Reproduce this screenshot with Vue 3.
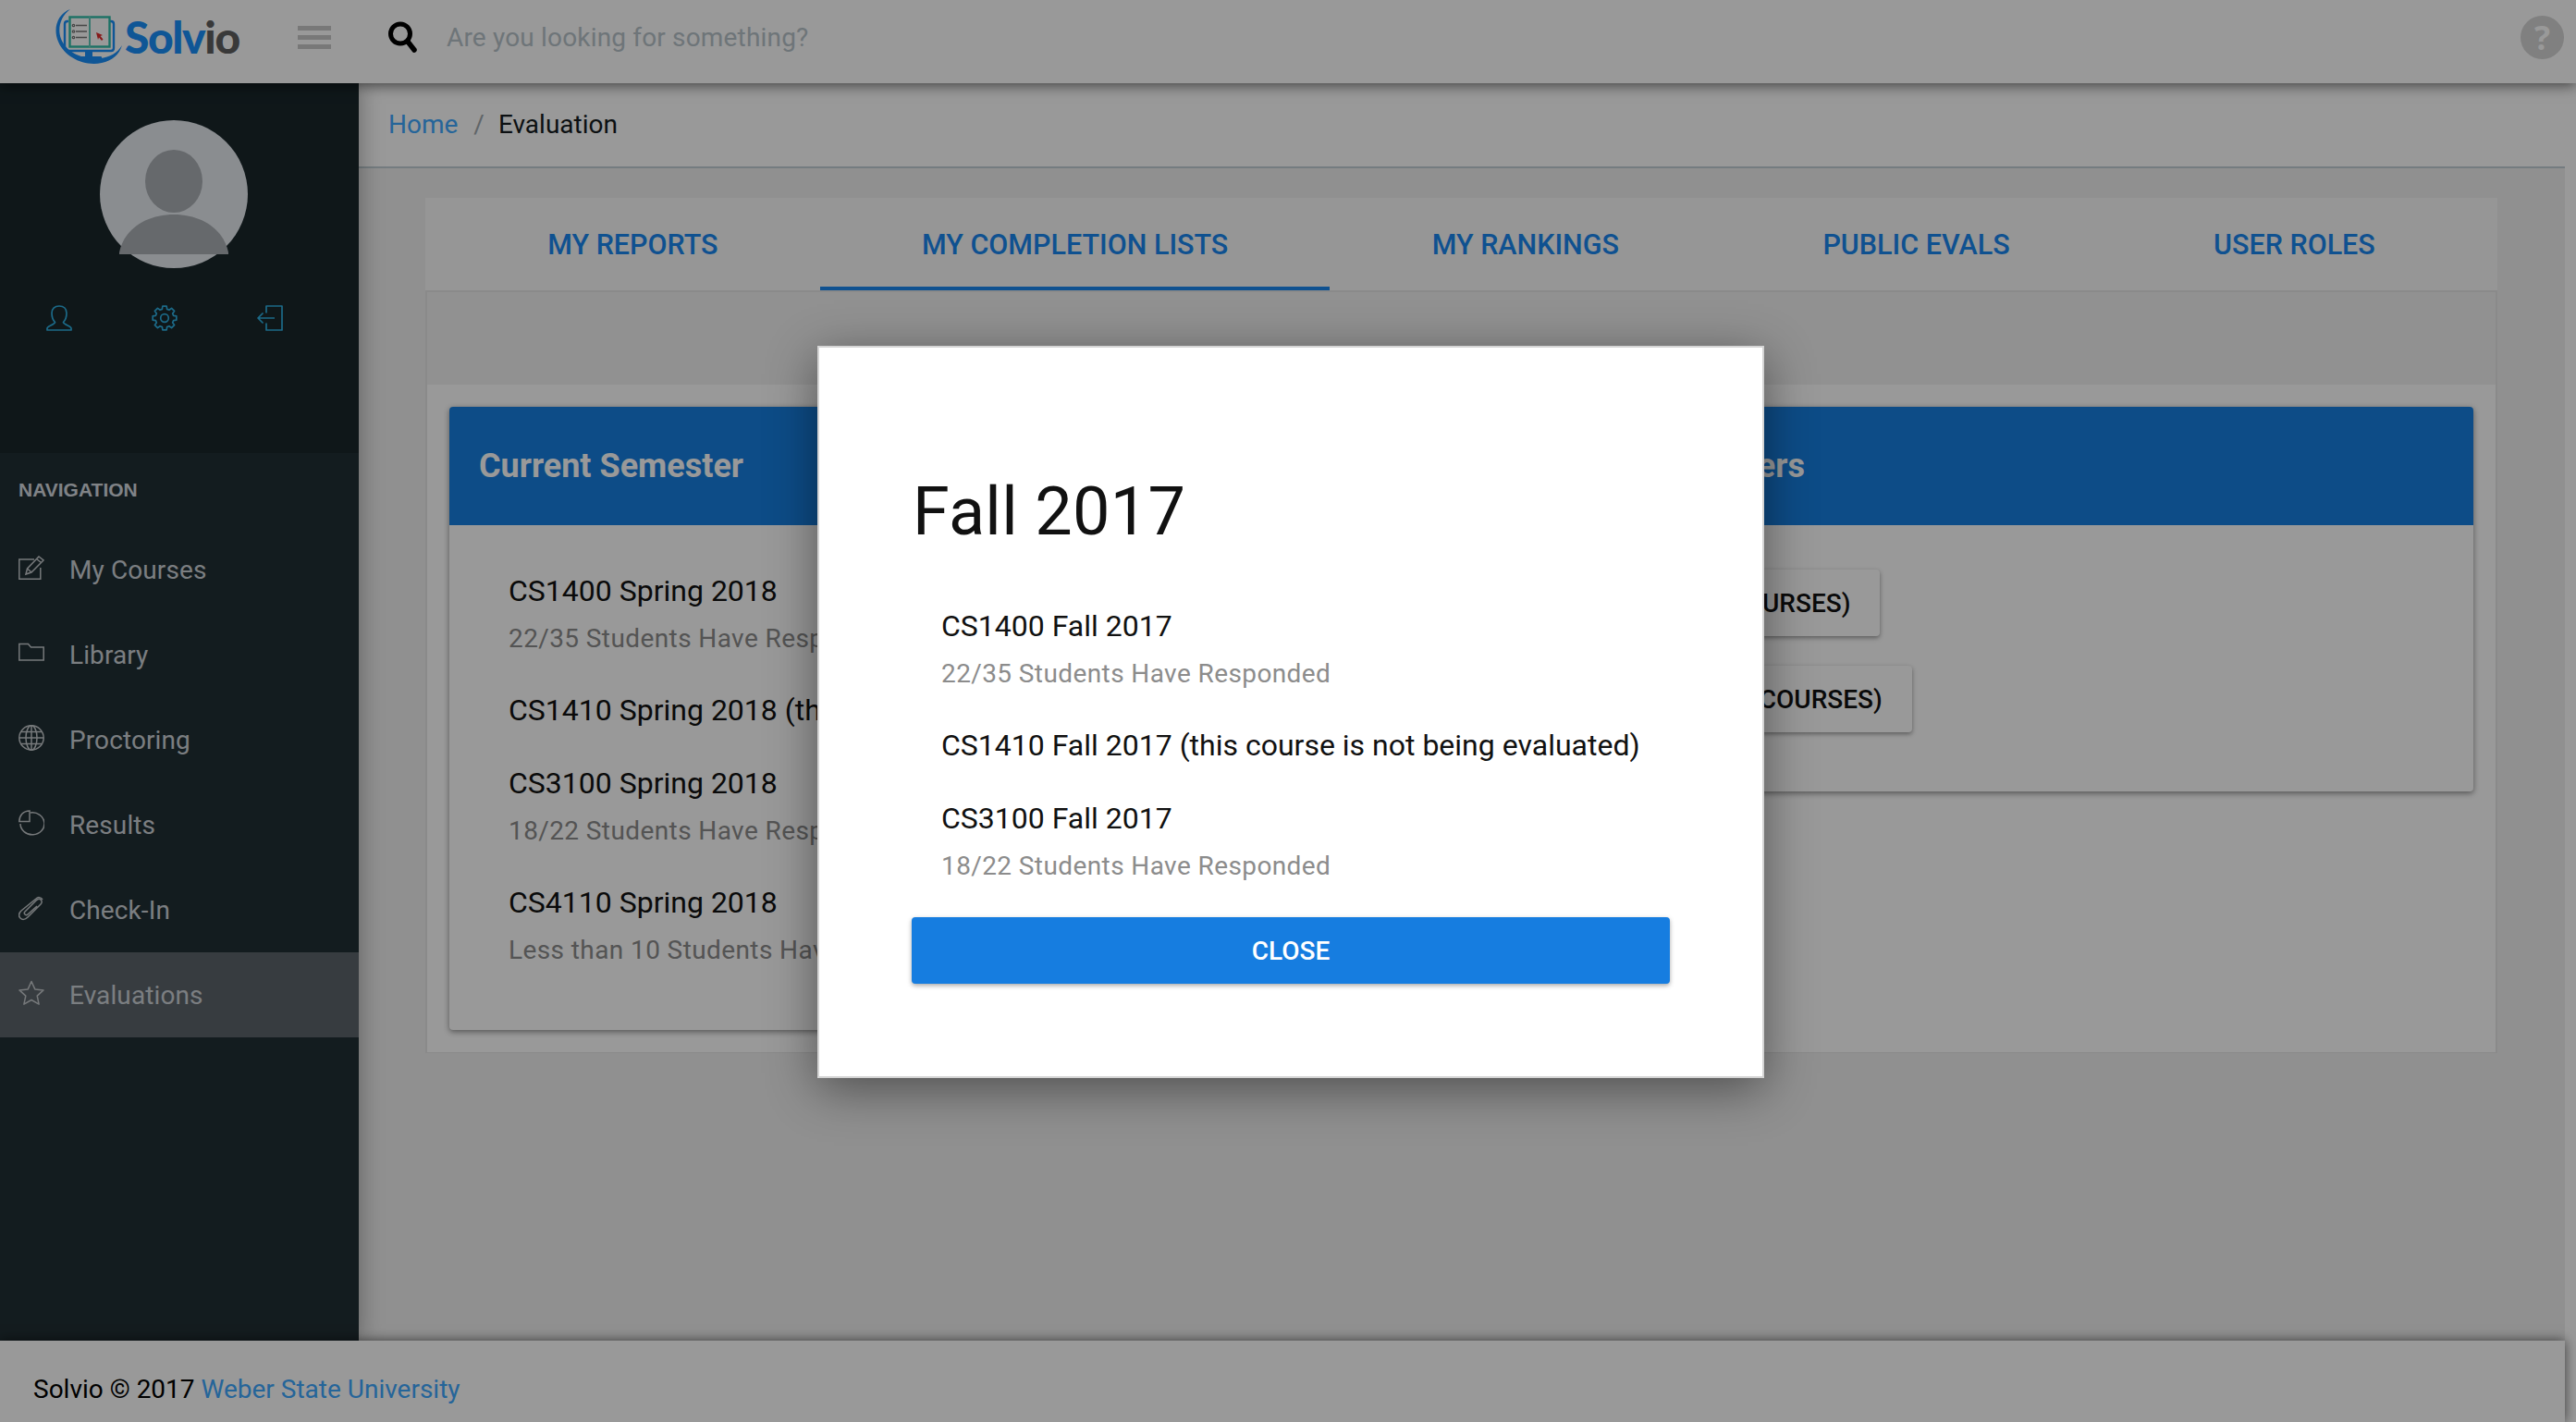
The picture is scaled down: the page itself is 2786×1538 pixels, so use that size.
<script setup>
const tabs = [
  { label: 'MY REPORTS' },
  { label: 'MY COMPLETION LISTS', active: true },
  { label: 'MY RANKINGS' },
  { label: 'PUBLIC EVALS' },
  { label: 'USER ROLES' }
]
const navItems = [
  { label: 'My Courses', icon: 'edit' },
  { label: 'Library', icon: 'folder' },
  { label: 'Proctoring', icon: 'globe' },
  { label: 'Results', icon: 'pie' },
  { label: 'Check-In', icon: 'clip' },
  { label: 'Evaluations', icon: 'star', active: true }
]
const current = [
  { title: 'CS1400 Spring 2018', sub: '22/35 Students Have Responded' },
  { title: 'CS1410 Spring 2018 (this course is not being evaluated)' },
  { title: 'CS3100 Spring 2018', sub: '18/22 Students Have Responded' },
  { title: 'CS4110 Spring 2018', sub: 'Less than 10 Students Have Responded' }
]
const modalItems = [
  { title: 'CS1400 Fall 2017', sub: '22/35 Students Have Responded' },
  { title: 'CS1410 Fall 2017 (this course is not being evaluated)' },
  { title: 'CS3100 Fall 2017', sub: '18/22 Students Have Responded' }
]
// Eight-toothed gear outline for the settings icon
const gearPath = (() => {
  const pts = []
  const teeth = 8
  for (let i = 0; i < teeth; i++) {
    const a = (i / teeth) * Math.PI * 2 - Math.PI / 2
    const step = Math.PI / teeth
    const pairs = [
      [a - step * 0.42, 13],
      [a + step * 0.42, 13],
      [a + step * 0.68, 10],
      [a + step * 1.32, 10]
    ]
    pairs.forEach(([t, r]) => {
      pts.push(`${(14 + r * Math.cos(t)).toFixed(2)} ${(14 + r * Math.sin(t)).toFixed(2)}`)
    })
  }
  return 'M' + pts.join('L') + 'Z'
})()
</script>

<template>
  <div class="page">
    <header class="topbar">
      <div class="logo">
        <svg class="logo-mark" viewBox="58 8 76 64" width="76" height="64">
          <path d="M76 10C62 15 57 31 63 45c7 17 28 27 47 23 11-2 19-9 22-19-5 8-13 13-24 14-18 2-36-6-42-21-4-11-1-24 10-32z" fill="#198ffa"/>
          <path d="M74 23h-1c-2 0-3 1-3 3v26c0 2 1 3 3 3h47c2 0 3-1 3-3V26c0-2-1-3-3-3h-1" fill="none" stroke="#198ffa" stroke-width="2.400"/>
          <rect x="92" y="55" width="8" height="7" fill="#198ffa"/>
          <rect x="83" y="61" width="27" height="3" rx="1" fill="#198ffa"/>
          <rect x="75.500" y="18.500" width="43" height="32" fill="#fff" stroke="#30bda9" stroke-width="2.400"/>
          <path d="M97 18v33" stroke="#5fc9ba" stroke-width="2"/>
          <g stroke="#777" stroke-width="1.300" fill="none">
            <path d="M82 27.500h12M82 34h12M82 40.500h12"/>
            <circle cx="79.500" cy="27.500" r="1.200"/>
            <circle cx="79.500" cy="34" r="1.200"/>
            <circle cx="79.500" cy="40.500" r="1.200"/>
          </g>
          <path d="M104 35l7 3-2.500 1 3 3.500-1.500 1.500-3-3.500-1 2.500z" fill="#e02a2a"/>
        </svg>
        <span class="logo-text"><b>Solv</b><i>io</i></span>
      </div>
      <div class="burger"><span></span><span></span><span></span></div>
      <svg class="search-icon" viewBox="0 0 34 36" width="34" height="36">
        <circle cx="15" cy="14.500" r="10.500" fill="none" stroke="#000" stroke-width="5"/>
        <path d="M23 23l7 9" stroke="#000" stroke-width="5.500" stroke-linecap="round"/>
      </svg>
      <span class="search-text">Are you looking for something?</span>
      <span class="help">?</span>
    </header>

    <div class="middle">
      <aside class="sidebar">
        <div class="profile">
          <div class="avatar">
            <svg viewBox="0 0 160 160" width="160" height="160">
              <circle cx="80" cy="80" r="80" fill="#e6ebf0"/>
              <ellipse cx="80" cy="66" rx="31" ry="34" fill="#aaafb4"/>
              <path d="M21 145V143C26 118 50 102 80 102S134 118 139 143V145z" fill="#aaafb4"/>
            </svg>
          </div>
          <div class="profile-icons">
            <svg viewBox="0 0 28 28" width="28" height="28">
              <path d="M1 27v-2c0-2 8-4 8.500-6.500C7 16 6 12 6 8.500 6 4 9 1 14 1s8 3 8 7.500c0 3.500-1 7.500-3.500 10C19 21 27 23 27 25v2z" fill="none" stroke="#2fb1e3" stroke-width="1.700" stroke-linejoin="round"/>
            </svg>
            <svg viewBox="0 0 28 28" width="28" height="28">
              <circle cx="14" cy="14" r="4.300" fill="none" stroke="#2fb1e3" stroke-width="1.700"/>
              <path :d="gearPath" fill="none" stroke="#2fb1e3" stroke-width="1.700" stroke-linejoin="round"/>
            </svg>
            <svg viewBox="0 0 28 28" width="28" height="28">
              <path d="M10 8.500V1h17v26H10v-7.500M1 14h18M6.500 8.500L1 14l5.500 5.500" fill="none" stroke="#2fb1e3" stroke-width="1.700" stroke-linejoin="round"/>
            </svg>
          </div>
        </div>
        <nav class="nav">
          <div class="nav-title">NAVIGATION</div>
          <div v-for="item in navItems" :key="item.label" class="nav-item" :class="{ active: item.active }">
            <svg class="nav-icon" viewBox="0 0 28 28" width="28" height="28">
              <g v-if="item.icon === 'edit'" fill="none" stroke="#c5cacd" stroke-width="1.500">
                <path d="M17 5H.8v21.200h23V14"/>
                <path d="M8 21l1.500-6L22 2l5 4L14 19z M19.500 4.500l5 4M9.500 15l4.500 4"/>
              </g>
              <path v-else-if="item.icon === 'folder'" d="M.8 4.500V22h26.400V8H13.500L10.500 4.500H.8z" fill="none" stroke="#c5cacd" stroke-width="1.500"/>
              <g v-else-if="item.icon === 'globe'" fill="none" stroke="#c5cacd" stroke-width="1.500">
                <circle cx="14" cy="14" r="13.200"/>
                <ellipse cx="14" cy="14" rx="6" ry="13.200"/>
                <path d="M14 .8v26.400M.8 14h26.400M3 7.500h22M3 20.500h22"/>
              </g>
              <g v-else-if="item.icon === 'pie'" fill="none" stroke="#c5cacd" stroke-width="1.500">
                <path d="M13 3a13 12 0 1 1-11 12"/>
                <path d="M12 1C5 1 1 6 .8 12.500H12z"/>
              </g>
              <g v-else-if="item.icon === 'clip'" fill="none" stroke="#c5cacd" stroke-width="1.500">
                <path d="M26 5c-2-3-5-3-7-1L3 17c-3 3-3 6-1 8s5 2 8-1L24 10c2-2 1-4 0-5s-3-1-5 1L7 18c-1 1-1 2 0 3s2 1 3 0l10-9"/>
              </g>
              <path v-else d="M14 1.500l3.800 8.400 9.200 1-6.800 6.200 1.900 9L14 21.500l-8.100 4.600 1.900-9L1 10.900l9.200-1z" fill="none" stroke="#c5cacd" stroke-width="1.500" stroke-linejoin="round"/>
            </svg>
            <span>{{ item.label }}</span>
          </div>
        </nav>
      </aside>

      <main class="main">
        <div class="breadcrumb">
          <a>Home</a><span class="sep">/</span><span>Evaluation</span>
        </div>
        <section class="content">
          <div class="tabs">
            <div v-for="tab in tabs" :key="tab.label" class="tab" :class="{ active: tab.active }">{{ tab.label }}</div>
          </div>
          <div class="tab-panel">
            <div class="band"></div>
            <div class="cards">
              <article class="card card-left">
                <h3 class="card-head">Current Semester</h3>
                <div class="card-body">
                  <div v-for="c in current" :key="c.title" class="course">
                    <div class="course-title">{{ c.title }}</div>
                    <div v-if="c.sub" class="course-sub">{{ c.sub }}</div>
                  </div>
                </div>
              </article>
              <article class="card card-right">
                <h3 class="card-head">Previous Semesters</h3>
                <div class="card-body btns">
                  <button class="semester-btn">SPRING 2017 (7 COURSES)</button>
                  <button class="semester-btn">SUMMER 2017 (12 COURSES)</button>
                </div>
              </article>
            </div>
          </div>
        </section>
      </main>
    </div>

    <footer class="footer">Solvio © 2017 <a>Weber State University</a></footer>

    <div class="overlay">
      <div class="modal">
        <h1 class="modal-title">Fall 2017</h1>
        <div class="modal-list">
          <div v-for="m in modalItems" :key="m.title" class="modal-item">
            <div class="course-title">{{ m.title }}</div>
            <div v-if="m.sub" class="modal-sub">{{ m.sub }}</div>
          </div>
        </div>
        <button class="close">CLOSE</button>
      </div>
    </div>
  </div>
</template>

<style>
html, body { margin: 0; overflow: hidden; background: #fff; }
</style>

<style scoped>
.page {
  position: relative;
  width: 2786px;
  height: 1538px;
  overflow: hidden;
  display: flex;
  flex-direction: column;
  font-family: Roboto, "Liberation Sans", sans-serif;
  background: #fff;
  color: #111;
}
.topbar {
  position: relative;
  z-index: 3;
  flex: 0 0 90px;
  box-sizing: border-box;
  display: flex;
  align-items: center;
  background: #fff;
  box-shadow: 0 2px 14px rgba(0, 0, 0, .6);
  padding: 0 13px 10px 58px;
}
.logo { display: flex; align-items: center; width: 264px; }
.logo-mark { flex: none; }
.logo-text { font-family: Lato, Roboto, sans-serif; font-size: 48px; letter-spacing: -1.400px; line-height: 1; margin-left: 1px; }
.logo-text b { color: #198ffa; font-weight: 900; }
.logo-text i { color: #606060; font-style: normal; font-weight: 900; }
.burger { width: 36px; display: flex; flex-direction: column; gap: 5px; }
.burger span { display: block; height: 5px; background: #c9c9c9; }
.search-icon { margin-left: 60px; }
.search-text { margin-left: 31px; font-size: 28px; letter-spacing: .17px; color: #b8c4ca; flex: 1; }
.help {
  width: 47px; height: 47px; border-radius: 50%;
  background: #d5d5d5; color: #fff;
  font: 700 36px/47px "Open Sans", Roboto, sans-serif;
  text-align: center;
}
.middle { flex: 1; min-height: 0; display: flex; }
.sidebar {
  position: relative;
  z-index: 2;
  flex: 0 0 388px;
  display: flex;
  flex-direction: column;
  background: #212f34;
  box-shadow: 0 0 24px rgba(0, 0, 0, .35);
}
.profile {
  flex: 0 0 400px;
  background: #19272b;
  box-sizing: border-box;
  padding-top: 40px;
  display: flex;
  flex-direction: column;
  align-items: flex-start;
}
.avatar { width: 160px; height: 160px; margin-left: 108px; }
.profile-icons {
  display: flex;
  gap: 86px;
  margin: 40px 0 0 50px;
}
.nav { flex: 1; padding-top: 23px; }
.nav-title {
  font-family: "Liberation Sans", Arial, sans-serif;
  font-weight: 700;
  font-size: 21px;
  color: #d5dbe0;
  padding: 5px 0 0 20px;
  height: 52px;
  box-sizing: border-box;
  margin-bottom: 5px;
}
.nav-item {
  height: 92px;
  display: flex;
  align-items: center;
  padding-left: 20px;
  font-size: 28px;
  color: #cdd3d8;
  letter-spacing: .1px;
}
.nav-item span { margin-left: 27px; }
.nav-icon { margin-top: -4px; }
.nav-item.active { background: #5d646b; }
.main {
  position: relative;
  flex: 1;
  min-width: 0;
  display: flex;
  flex-direction: column;
  background: #f0f0f0;
  margin-right: 12px;
}
.breadcrumb {
  flex: 0 0 92px;
  box-sizing: border-box;
  display: flex;
  align-items: center;
  padding: 0 0 2px 32px;
  font-size: 28px;
  background: #fff;
  border-bottom: 2px solid #c2cfd5;
  color: #151b1e;
}
.breadcrumb a { color: #3ea8ff; }
.sep { color: #a0a8ae; margin: 0 15px 0 17px; }
.content { margin: 32px 0 0 72px; width: 2241px; }
.tabs { display: flex; background: #fbfbfb; height: 100px; padding-left: 22px; box-sizing: border-box; }
.tab {
  box-sizing: border-box;
  text-align: center;
  padding: 0 110.200px;
  font-size: 30.500px;
  font-weight: 500;
  color: #1987f0;
  line-height: 101px;
  height: 100px;
}
.tab.active { border-bottom: 4px solid #1987f0; }
.tab-panel { border: 2px solid #e6e6e6; box-sizing: border-box; border-bottom-width: 1px; }
.band { height: 100px; background: #f2f2f2; }
.cards {
  display: flex;
  justify-content: space-between;
  background: #fff;
  padding: 24px 24px 0;
  height: 722px;
  box-sizing: border-box;
}
.card { border-radius: 4px; box-shadow: 0 2px 6px rgba(0, 0, 0, .45); background: #fff; overflow: hidden; align-self: flex-start; }
.card-left { width: 1080px; height: 674px; }
.card-right { width: 1080px; height: 416px; }
.card-head {
  margin: 0;
  background: #177fe1;
  color: #fff;
  height: 128px;
  line-height: 128px;
  font-size: 36px;
  font-weight: 700;
  padding-left: 32px;
}
.card-body { padding: 49px 0 0 64px; }
.btns { padding-top: 48px; }
.course { margin-bottom: 35px; white-space: nowrap; }
.course-title { font-size: 32px; color: #111; line-height: 44px; }
.course-sub { font-size: 28px; letter-spacing: .4px; color: #8c8c8c; line-height: 40px; margin-top: 10px; }
.btns { display: flex; flex-direction: column; align-items: flex-start; padding-left: 32px; gap: 32px; }
.semester-btn {
  height: 72px;
  padding: 0 32px;
  border: 0;
  border-radius: 4px;
  background: #fff;
  font: 500 28px Roboto, sans-serif;
  color: #111;
  box-shadow: 0 2px 5px rgba(0, 0, 0, .4);
}
.footer {
  position: relative;
  z-index: 2;
  flex: 0 0 88px;
  margin-right: 12px;
  background: #fff;
  font-size: 28px;
  box-sizing: border-box;
  padding: 36px 0 0 36px;
  line-height: 34px;
  box-shadow: 0 0 12px rgba(0, 0, 0, .6);
  color: #000;
}
.footer a { color: #3ea8ff; }
.overlay {
  position: absolute;
  inset: 0;
  z-index: 10;
  background: rgba(0, 0, 0, .4);
}
.modal {
  position: absolute;
  left: 884px;
  top: 374px;
  width: 1024px;
  height: 792px;
  box-sizing: border-box;
  background: #fff;
  border: 2px solid #d4d4d4;
  box-shadow: 0 12px 50px rgba(0, 0, 0, .45);
  padding: 0 100px;
}
.modal-title {
  margin: 136px 0 0 1px;
  font-size: 72px;
  letter-spacing: .3px;
  font-weight: 400;
  line-height: 84px;
  color: #111;
}
.modal-list { margin-top: 59px; padding-left: 32px; }
.modal-item { margin-bottom: 35px; }
.modal-sub { font-size: 28px; letter-spacing: .4px; line-height: 40px; color: #8c8c8c; margin-top: 10px; }
.close {
  display: block;
  width: 820px;
  height: 72px;
  border: 0;
  border-radius: 4px;
  background: #167de0;
  color: #fff;
  font: 500 28px Roboto, sans-serif;
  box-shadow: 0 2px 5px rgba(0, 0, 0, .35);
}
</style>
